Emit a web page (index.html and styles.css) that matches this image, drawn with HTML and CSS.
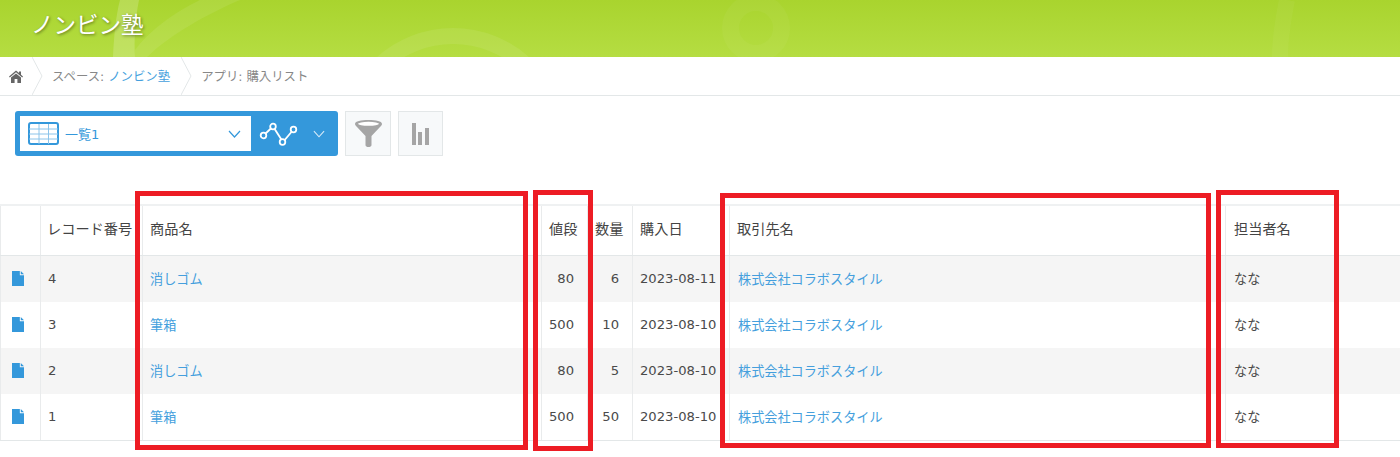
FILE: index.html
```html
<!DOCTYPE html>
<html lang="ja">
<head>
    <meta charset="UTF-8">
    <title>購入リスト</title>
    <link rel="stylesheet" href="styles.css">
</head>
<body>
    <div class="header">
        <svg class="header-deco" width="1400" height="57" viewBox="0 0 1400 57">
            <path d="M113 57 C114 35 116 15 120 0 H139 C135 20 134 40 135 57 Z" fill="#fff" opacity="0.18"/>
            <path d="M135 50 C150 30 175 12 200 0 H240 C205 15 170 35 147 57 H135 Z" fill="#fff" opacity="0.08"/>
            <circle cx="453" cy="142" r="106" fill="none" stroke="#fff" stroke-width="16" opacity="0.08"/>
            <circle cx="756" cy="28" r="25.500" fill="none" stroke="#fff" stroke-width="17" opacity="0.04"/>
            <path d="M1287 0 C1283 20 1280 38 1280 57" fill="none" stroke="#fff" stroke-width="16" opacity="0.04"/>
        </svg>
        <h1>ノンビン塾</h1>
    </div>

    <div class="breadcrumb">
        <a class="crumb-home" href="#">
            <svg width="14" height="13" viewBox="0 0 14 13"><path d="M7 0.5 L10 3 V1.5 H12 V4.8 L14 6.6 L13.2 7.4 L7 2.2 L0.8 7.4 L0 6.6 Z M2 7.6 L7 3.5 L12 7.6 V13 H8.4 V9 H5.6 V13 H2 Z" fill="#666"/></svg>
        </a>
        <svg class="crumb-sep" width="11" height="38" viewBox="0 0 11 38"><path d="M0 0 L10 19 L0 38" fill="none" stroke="#e3e7e8"/></svg>
        <span class="crumb">スペース: <a href="#">ノンビン塾</a></span>
        <svg class="crumb-sep" width="11" height="38" viewBox="0 0 11 38"><path d="M0 0 L10 19 L0 38" fill="none" stroke="#e3e7e8"/></svg>
        <span class="crumb">アプリ: 購入リスト</span>
    </div>

    <div class="toolbar">
        <div class="view-switch">
            <div class="view-select">
                <svg class="view-icon" width="31" height="23" viewBox="0 0 31 23">
                    <rect x="1" y="1" width="29" height="21" rx="2" fill="#fff" stroke="#3498db" stroke-width="2"/>
                    <path d="M1 7 H30 M1 12 H30 M1 17 H30 M11 2 V22 M20.500 2 V22" stroke="#8cc4ea" stroke-width="1" fill="none"/>
                </svg>
                <span class="view-name">一覧1</span>
                <svg class="chevron" width="13" height="8" viewBox="0 0 13 8"><path d="M1 1 L6.500 7 L12 1" fill="none" stroke="#3498db" stroke-width="1.200"/></svg>
            </div>
            <div class="graph-select">
                <svg width="39" height="24" viewBox="0 0 39 24">
                    <path d="M5 13 L14 4.500 L24 20 L34.500 7.500" fill="none" stroke="#fff" stroke-width="1.800"/>
                    <circle cx="4.500" cy="13.500" r="2.800" fill="#3498db" stroke="#fff" stroke-width="1.800"/>
                    <circle cx="14" cy="4.500" r="2.800" fill="#3498db" stroke="#fff" stroke-width="1.800"/>
                    <circle cx="23.500" cy="20" r="2.800" fill="#3498db" stroke="#fff" stroke-width="1.800"/>
                    <circle cx="34.500" cy="7.500" r="2.800" fill="#3498db" stroke="#fff" stroke-width="1.800"/>
                </svg>
                <svg class="chevron-light" width="12" height="8" viewBox="0 0 13 8"><path d="M1 1 L6.500 7 L12 1" fill="none" stroke="#d6eaf8" stroke-width="1.200"/></svg>
            </div>
        </div>
        <button class="tool-btn" title="絞り込む">
            <svg width="27" height="27" viewBox="0 0 27 27">
                <path d="M0 4 C0 1 6 0 13.500 0 C21 0 27 1 27 4 C27 5 26 6 25 7 L16.500 16 V25 C16.500 26.500 15 27 13.500 27 C12 27 10.500 26.500 10.500 25 V16 L2 7 C1 6 0 5 0 4 Z" fill="#a5a5a5"/>
                <ellipse cx="13.500" cy="3.800" rx="10.500" ry="2" fill="#fff"/>
            </svg>
        </button>
        <button class="tool-btn" title="グラフ">
            <svg width="17" height="22" viewBox="0 0 17 22"><path d="M0 0 H4 V22 H0 Z M6 9 H10 V22 H6 Z M13 5 H17 V22 H13 Z" fill="#a5a5a5"/></svg>
        </button>
    </div>

    <table class="record-table">
        <colgroup>
            <col class="c-icon"><col class="c-no"><col class="c-item"><col class="c-price"><col class="c-qty"><col class="c-date"><col class="c-client"><col class="c-staff"><col>
        </colgroup>
        <thead>
            <tr>
                <th></th>
                <th>レコード番号</th>
                <th>商品名</th>
                <th>値段</th>
                <th>数量</th>
                <th>購入日</th>
                <th>取引先名</th>
                <th>担当者名</th>
                <th class="filler"></th>
            </tr>
        </thead>
        <tbody>
            <tr>
                <td class="doc"><svg width="12" height="15" viewBox="0 0 13 16"><path d="M0 0 H8.500 V4.500 H13 V16 H0 Z M9.500 0 L13 3.500 H9.500 Z" fill="#3498db"/></svg></td>
                <td>4</td>
                <td><a href="#">消しゴム</a></td>
                <td class="num">80</td>
                <td class="num">6</td>
                <td>2023-08-11</td>
                <td><a href="#">株式会社コラボスタイル</a></td>
                <td>なな</td>
                <td class="filler"></td>
            </tr>
            <tr>
                <td class="doc"><svg width="12" height="15" viewBox="0 0 13 16"><path d="M0 0 H8.500 V4.500 H13 V16 H0 Z M9.500 0 L13 3.500 H9.500 Z" fill="#3498db"/></svg></td>
                <td>3</td>
                <td><a href="#">筆箱</a></td>
                <td class="num">500</td>
                <td class="num">10</td>
                <td>2023-08-10</td>
                <td><a href="#">株式会社コラボスタイル</a></td>
                <td>なな</td>
                <td class="filler"></td>
            </tr>
            <tr>
                <td class="doc"><svg width="12" height="15" viewBox="0 0 13 16"><path d="M0 0 H8.500 V4.500 H13 V16 H0 Z M9.500 0 L13 3.500 H9.500 Z" fill="#3498db"/></svg></td>
                <td>2</td>
                <td><a href="#">消しゴム</a></td>
                <td class="num">80</td>
                <td class="num">5</td>
                <td>2023-08-10</td>
                <td><a href="#">株式会社コラボスタイル</a></td>
                <td>なな</td>
                <td class="filler"></td>
            </tr>
            <tr>
                <td class="doc"><svg width="12" height="15" viewBox="0 0 13 16"><path d="M0 0 H8.500 V4.500 H13 V16 H0 Z M9.500 0 L13 3.500 H9.500 Z" fill="#3498db"/></svg></td>
                <td>1</td>
                <td><a href="#">筆箱</a></td>
                <td class="num">500</td>
                <td class="num">50</td>
                <td>2023-08-10</td>
                <td><a href="#">株式会社コラボスタイル</a></td>
                <td>なな</td>
                <td class="filler"></td>
            </tr>
        </tbody>
    </table>

    <!-- 赤枠の注釈 -->
    <div class="mark mark-item"></div>
    <div class="mark mark-price"></div>
    <div class="mark mark-client"></div>
    <div class="mark mark-staff"></div>
</body>
</html>
```

FILE: styles.css
```css
html, body { height: 457px; overflow: hidden; }
body { position: relative; margin: 0; background-color: #fff; color: #4a4a4a; font-family: "DejaVu Sans", "Noto Sans CJK JP", sans-serif; font-size: 13px; }
a { color: #459fdd; text-decoration: none; }

.header { position: relative; height: 57px; background: linear-gradient(#a9d42e, #b5dd42); overflow: hidden; }
.header-deco { position: absolute; left: 0; top: 0; }
.header h1 { position: relative; margin: 0; padding-left: 31px; font-size: 22.500px; font-weight: normal; line-height: 50px; color: #fff; text-shadow: 1px 1px 3px rgba(0,0,0,0.45); }

.breadcrumb { display: flex; align-items: center; height: 38px; border-bottom: 1px solid #e3e7e8; color: #888; font-size: 12.400px; }
.crumb-home { display: flex; width: 32px; padding-left: 9px; box-sizing: border-box; }
.crumb { white-space: nowrap; }
.crumb-sep { flex: none; margin-right: 9px; }
.crumb + .crumb-sep { margin-left: 11px; }

.toolbar { display: flex; gap: 7px; padding: 15px 0 0 15px; height: 45px; }
.view-switch { display: flex; align-items: center; width: 323px; height: 45px; padding: 5px; box-sizing: border-box; background-color: #3498db; border-radius: 3px; }
.view-select { display: flex; align-items: center; width: 231px; height: 35px; padding: 0 10px 0 8px; box-sizing: border-box; background-color: #fff; }
.view-name { flex: 1; margin-left: 6px; color: #3498db; }
.chevron { flex: none; }
.graph-select { display: flex; align-items: center; padding-left: 8px; }
.chevron-light { margin-left: 15px; }
.tool-btn { display: flex; align-items: center; justify-content: center; width: 46px; height: 45px; padding: 0; background-color: #f7f9fa; border: 1px solid #e3e7e8; }
.tool-btn:last-child { width: 45px; }

.record-table { width: 1400px; margin-top: 48px; table-layout: fixed; border-collapse: collapse; }
.c-icon { width: 40px; }
.c-no { width: 102px; }
.c-item { width: 399px; }
.c-price { width: 46px; }
.c-qty { width: 45px; }
.c-date { width: 97px; }
.c-client { width: 496px; }
.c-staff { width: 109px; }
.record-table th, .record-table td { padding: 0 0 0 7px; border-left: 1px solid #e9ebec; border-right: 1px solid #e9ebec; text-align: left; white-space: nowrap; overflow: visible; }
.record-table th:nth-child(2) { padding-left: 6px; }
.record-table td:nth-child(7), .record-table th:nth-child(8), .record-table td:nth-child(8) { padding-left: 8px; }
.record-table th { height: 50px; padding-bottom: 4px; box-sizing: border-box; font-size: 14.200px; font-weight: normal; color: #444; border-top: 2px solid #eff1f2; border-bottom: 1px solid #e3e7e8; }
.record-table td { height: 46px; font-size: 13.150px; }
.record-table tbody tr:nth-child(odd) td { background-color: #f5f5f5; }
.record-table tbody tr:last-child td { border-bottom: 1px solid #e3e7e8; }
.record-table th:last-child, .record-table td:last-child { border-right: none; }
.record-table th.filler, .record-table td.filler { border-left: none; }
.record-table td.doc { padding-left: 11px; line-height: 0; }
.record-table td.num { padding: 0 13px 0 0; text-align: right; }

.mark { position: absolute; box-sizing: border-box; border: 5px solid #ed1c24; }
.mark-item { left: 135px; top: 191px; width: 393px; height: 259px; }
.mark-price { left: 533px; top: 190px; width: 60px; height: 261px; }
.mark-client { left: 720px; top: 193px; width: 491px; height: 255px; }
.mark-staff { left: 1216px; top: 190px; width: 123px; height: 258px; }
```
